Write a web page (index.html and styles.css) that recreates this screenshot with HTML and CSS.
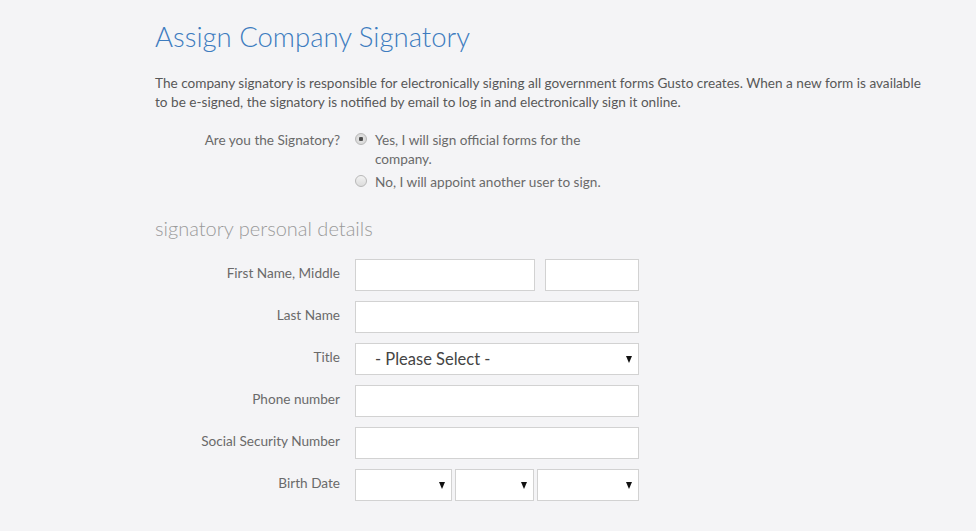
FILE: index.html
```html
<!DOCTYPE html>
<html lang="en">
<head>
    <meta charset="UTF-8">
    <meta name="viewport" content="width=device-width, initial-scale=1.0">
    <title>Assign Company Signatory</title>
    <link rel="stylesheet" href="styles.css">
</head>
<body>
    <div class="container">
        <h1>Assign Company Signatory</h1>

        <p class="intro">The company signatory is responsible for electronically signing all government forms Gusto creates. When a new form is available to be e-signed, the signatory is notified by email to log in and electronically sign it online.</p>

        <!-- Signatory choice -->
        <div class="signatory-row">
            <div class="label">Are you the Signatory?</div>
            <div class="options">
                <label class="option">
                    <input type="radio" name="signatory" checked>
                    <span>Yes, I will sign official forms for the company.</span>
                </label>
                <label class="option">
                    <input type="radio" name="signatory">
                    <span>No, I will appoint another user to sign.</span>
                </label>
            </div>
        </div>

        <h2>signatory personal details</h2>

        <!-- Personal details -->
        <div class="form-grid">
            <label class="label">First Name, Middle</label>
            <div class="split split-name">
                <input type="text">
                <input type="text">
            </div>

            <label class="label">Last Name</label>
            <input type="text">

            <label class="label">Title</label>
            <div class="select-wrap">
                <select class="title-select">
                    <option>- Please Select -</option>
                </select>
            </div>

            <label class="label">Phone number</label>
            <input type="text">

            <label class="label">Social Security Number</label>
            <input type="text">

            <label class="label">Birth Date</label>
            <div class="split split-date">
                <div class="select-wrap"><select><option></option></select></div>
                <div class="select-wrap"><select><option></option></select></div>
                <div class="select-wrap"><select><option></option></select></div>
            </div>
        </div>
    </div>
</body>
</html>
```

FILE: styles.css
```css
body {
    margin: 0;
    background: #f4f4f6;
    font-family: Lato, "Open Sans", sans-serif;
    color: #5a5a5a;
}
.container {
    width: 778px;
    padding-left: 155px;
}
h1 {
    margin: 20px 0 0;
    font-size: 27.5px;
    line-height: 34px;
    font-weight: 300;
    color: #3d7cbf;
}
.intro {
    margin: 20px 0 0;
    font-size: 13.6px;
    line-height: 19px;
    color: #585858;
}
.label {
    font-size: 13.6px;
    color: #6a6a6a;
    text-align: right;
}
.signatory-row {
    display: grid;
    grid-template-columns: 185px 250px;
    column-gap: 15px;
    margin-top: 19px;
    font-size: 13.6px;
    line-height: 19px;
}
.options {
    display: flex;
    flex-direction: column;
    gap: 4px;
}
.option {
    display: flex;
    gap: 8px;
    color: #6a6a6a;
}
.option input {
    appearance: none;
    flex: none;
    width: 12px;
    height: 12px;
    margin: 2px 0 0;
    border: 1px solid #b8b8b8;
    border-radius: 50%;
    background: linear-gradient(#f2f2f2, #dcdcdc);
    box-sizing: border-box;
}
.option input:checked {
    background: radial-gradient(circle, #444 0, #555 2px, #e0e0e0 2.5px, #d4d4d4 100%);
}
h2 {
    margin: 23px 0 0;
    font-size: 20px;
    line-height: 26px;
    font-weight: 300;
    color: #9a9a9a;
}
.form-grid {
    display: grid;
    grid-template-columns: 185px 284px;
    column-gap: 15px;
    row-gap: 10px;
    align-items: center;
    margin-top: 18px;
}
.form-grid .label {
    padding-bottom: 4px;
}
input[type="text"], select {
    display: block;
    width: 100%;
    height: 32px;
    margin: 0;
    border: 1px solid #d2d2d2;
    background: #fff;
    box-sizing: border-box;
    border-radius: 0;
    font-family: inherit;
}
select {
    appearance: none;
    padding: 0 20px 0 19px;
    font-size: 16.5px;
    color: #444;
}
.split {
    display: flex;
}
.split-name {
    gap: 10px;
}
.split-name input:first-child {
    width: 180px;
}
.split-name input:last-child {
    flex: 1;
}
.split-date {
    gap: 3px;
}
.split-date .select-wrap:nth-child(1) {
    width: 97px;
}
.split-date .select-wrap:nth-child(2) {
    width: 79px;
}
.split-date .select-wrap:nth-child(3) {
    flex: 1;
}
.select-wrap {
    position: relative;
}
.select-wrap::after {
    content: "";
    position: absolute;
    right: 7px;
    top: 13px;
    border-left: 3.5px solid transparent;
    border-right: 3.5px solid transparent;
    border-top: 7px solid #111;
    pointer-events: none;
}
```
